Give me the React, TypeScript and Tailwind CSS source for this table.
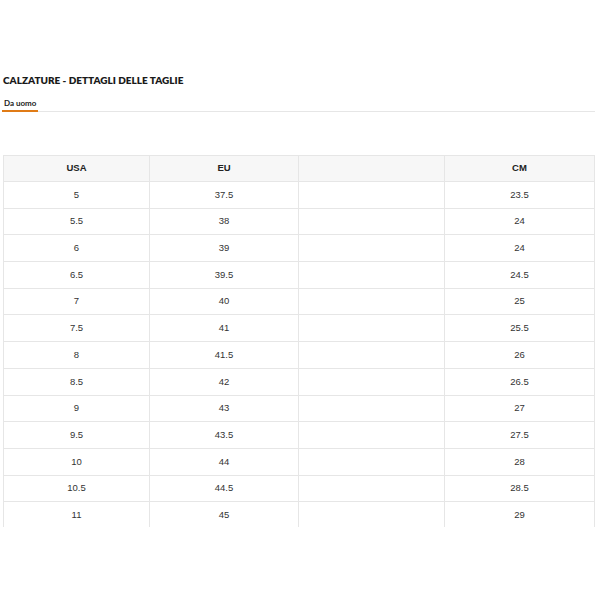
const rows: [string, string, string][] = [
  ['5', '37.5', '23.5'],
  ['5.5', '38', '24'],
  ['6', '39', '24'],
  ['6.5', '39.5', '24.5'],
  ['7', '40', '25'],
  ['7.5', '41', '25.5'],
  ['8', '41.5', '26'],
  ['8.5', '42', '26.5'],
  ['9', '43', '27'],
  ['9.5', '43.5', '27.5'],
  ['10', '44', '28'],
  ['10.5', '44.5', '28.5'],
  ['11', '45', '29'],
];

const cols = 'grid grid-cols-[146px_149px_146px_1fr]';

export default function App() {
  return (
    <div className="w-[600px] h-[600px] bg-white text-[#333]">
      <div className="pt-[73px] pl-[3px] pr-[5px]">
        <h1 className="text-[10px] leading-[14px] font-extrabold text-[#1a1a1a] [font-family:Lato,sans-serif]">
          CALZATURE - DETTAGLI DELLE TAGLIE
        </h1>
        <div className="mt-[10px] flex border-b border-[#e6e6e6]">
          <div className="ml-[-1px] px-[2px] pb-[1px] leading-[12px] border-b-2 border-[#e07b16] text-[8px] font-bold text-[#222] [font-family:Lato,sans-serif] mb-[-1px]">
            Da uomo
          </div>
        </div>
      </div>

      <div className="mt-[43px] ml-[3px] w-[592px] h-[372px] overflow-hidden [font-family:'Liberation_Sans',Arial,sans-serif] text-[9.5px]">
        <div className={`${cols} h-[27px] bg-[#f7f7f7] border border-[#e6e6e6] font-bold text-[#222]`}>
          <div className="flex items-center justify-center border-r border-[#e6e6e6]">USA</div>
          <div className="flex items-center justify-center border-r border-[#e6e6e6]">EU</div>
          <div className="border-r border-[#e6e6e6]" />
          <div className="flex items-center justify-center">CM</div>
        </div>
        {rows.map(([usa, eu, cm]) => (
          <div key={usa} className={`${cols} h-[26.7px] border-x border-b border-[#e6e6e6] text-[#333]`}>
            <div className="flex items-center justify-center border-r border-[#e6e6e6]">{usa}</div>
            <div className="flex items-center justify-center border-r border-[#e6e6e6]">{eu}</div>
            <div className="border-r border-[#e6e6e6]" />
            <div className="flex items-center justify-center">{cm}</div>
          </div>
        ))}
      </div>
    </div>
  );
}
